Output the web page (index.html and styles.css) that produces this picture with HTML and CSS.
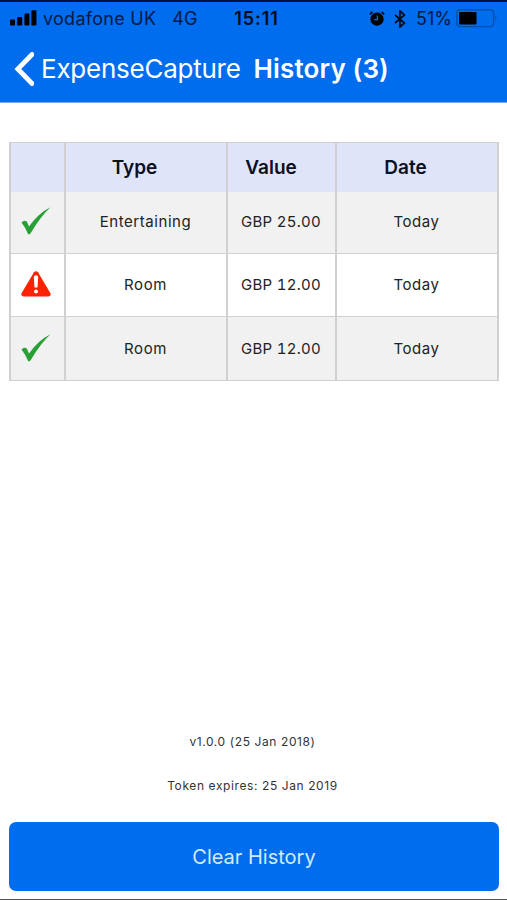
FILE: index.html
```html
<!DOCTYPE html>
<html lang="en">

<head>
    <meta charset="UTF-8">
    <meta name="viewport" content="width=device-width, initial-scale=1.0">
    <title>ExpenseCapture - History</title>
    <link rel="stylesheet" href="styles.css">
</head>

<body>

    <header>
        <div class="status-bar">
            <div class="status-left">
                <svg class="signal" width="27" height="17" viewBox="0 0 27 17">
                    <rect x="0" y="9.5" width="5" height="6" rx="1.2" />
                    <rect x="7.2" y="7" width="5" height="8.5" rx="1.2" />
                    <rect x="14.4" y="3.5" width="5" height="12" rx="1.2" />
                    <rect x="21.4" y="0.3" width="5" height="15.2" rx="1.2" />
                </svg>
                <span class="carrier">vodafone UK</span>
                <span class="network">4G</span>
            </div>
            <span class="clock">15:11</span>
            <div class="status-right">
                <svg width="16" height="16" viewBox="0 0 16 16">
                    <circle cx="8" cy="8.2" r="6.6" />
                    <path d="M0.8 3.3L3.4 0.9M15.2 3.3L12.6 0.9" fill="none" stroke="#000b1c" stroke-width="1.8" />
                    <path d="M8.4 4.5v4.1H5.2" fill="none" stroke="#006cee" stroke-width="1.3" />
                </svg>
                <svg class="bluetooth" width="12" height="18" viewBox="0 0 12 18">
                    <path d="M1 5l9.5 8L6 17V1l4.5 4L1 13" fill="none" stroke="#000b1c" stroke-width="1.7" />
                </svg>
                <span class="percent">51%</span>
                <svg class="battery" width="42" height="19" viewBox="0 0 42 19">
                    <rect x="0.8" y="0.8" width="36.8" height="16.8" rx="3" fill="none" stroke="#0450ae" stroke-width="1.4" />
                    <rect x="3" y="3" width="17.5" height="12.4" rx="0.8" fill="#000" />
                    <path d="M39.3 6.5q2.6 2.8 0 5.8z" fill="#0450ae" />
                </svg>
            </div>
        </div>
        <div class="nav-bar">
            <svg class="back" width="20" height="34" viewBox="0 0 20 34">
                <path d="M18 2.5L3.8 17l14.2 14.5" fill="none" stroke="#fff" stroke-width="4.8" stroke-linecap="round" />
            </svg>
            <span class="back-label">ExpenseCapture</span>
            <h1>History (3)</h1>
        </div>
    </header>

    <main>
        <table>
            <colgroup>
                <col class="col-status">
                <col class="col-type">
                <col class="col-value">
                <col class="col-date">
            </colgroup>
            <thead>
                <tr>
                    <th></th>
                    <th>Type</th>
                    <th>Value</th>
                    <th>Date</th>
                </tr>
            </thead>
            <tbody>
                <tr>
                    <td class="icon"><svg width="30" height="28" viewBox="0 0 30 28"><path class="tick" d="M0.5 15.5Q3 12.8 5.8 14.5L8 19.5Q17 6.5 29.5 0.3Q19.5 9.5 9.8 26Q8.2 28.5 6.8 26.5Q4.5 20.5 0.5 15.5z" /></svg></td>
                    <td>Entertaining</td>
                    <td class="value">GBP 25.00</td>
                    <td>Today</td>
                </tr>
                <tr>
                    <td class="icon"><svg width="30" height="26" viewBox="0 0 30 26"><path class="warning" d="M13 1.3q2-2 4 0L29.3 22q1.3 3-1.8 3.5h-25Q-0.6 25 0.7 22z" /><path d="M12.8 6q0-1.8 2.2-1.8t2.2 1.8l-0.7 10.5h-3z" fill="#fff" /><circle cx="15" cy="20.5" r="2" fill="#fff" /></svg></td>
                    <td>Room</td>
                    <td class="value">GBP 12.00</td>
                    <td>Today</td>
                </tr>
                <tr>
                    <td class="icon"><svg width="30" height="28" viewBox="0 0 30 28"><path class="tick" d="M0.5 15.5Q3 12.8 5.8 14.5L8 19.5Q17 6.5 29.5 0.3Q19.5 9.5 9.8 26Q8.2 28.5 6.8 26.5Q4.5 20.5 0.5 15.5z" /></svg></td>
                    <td>Room</td>
                    <td class="value">GBP 12.00</td>
                    <td>Today</td>
                </tr>
            </tbody>
        </table>
    </main>

    <footer>
        <p class="version">v1.0.0 (25 Jan 2018)</p>
        <p class="token">Token expires: 25 Jan 2019</p>
        <button>Clear History</button>
    </footer>

</body>

</html>
```

FILE: styles.css
```css
* {
    box-sizing: border-box;
}

body {
    margin: 0;
    height: 900px;
    display: flex;
    flex-direction: column;
    overflow: hidden;
    background-color: #fff;
    border-bottom: 1px solid #555;
    font-family: Inter, sans-serif;
}

header {
    height: 103px;
    background-color: #006cee;
    border-top: 2px solid #00103a;
    border-bottom: 1px solid #7faee8;
}

.status-bar {
    display: grid;
    grid-template-columns: 1fr auto 1fr;
    align-items: center;
    height: 33px;
    padding: 0 9px 0 10px;
    color: #001a44;
    font-size: 18px;
    white-space: nowrap;
}

.status-left,
.status-right {
    display: flex;
    align-items: center;
}

.status-right {
    justify-content: flex-end;
}

.carrier {
    margin-left: 6px;
    letter-spacing: 0.27px;
}

.network {
    margin-left: 16px;
}

.clock {
    margin-left: 5px;
    font-weight: 600;
    color: #000b1c;
    letter-spacing: 0.9px;
}

.bluetooth {
    margin-left: 9px;
}

.percent {
    margin: 0 4px 0 10px;
}

.nav-bar {
    display: flex;
    align-items: center;
    height: 67px;
    padding-left: 14px;
    color: #fff;
    font-size: 26px;
    white-space: nowrap;
}

.back-label {
    margin-left: 7px;
    letter-spacing: -0.25px;
}

h1 {
    margin: 0 0 0 13px;
    font-size: 26px;
    font-weight: 600;
    letter-spacing: 0.15px;
}

main {
    flex: 1;
    padding: 39px 8px 0 9px;
}

table {
    width: 490px;
    table-layout: fixed;
    border-collapse: collapse;
    color: #222;
    font-size: 15px;
}

.col-status {
    width: 55px;
}

.col-type {
    width: 162px;
}

.col-value {
    width: 109px;
}

th,
td {
    padding: 0;
    text-align: center;
    border: 2px solid #d0d0d0;
    border-top-width: 1px;
    border-bottom-width: 1px;
}

th {
    height: 49px;
    padding-right: 23px;
    background-color: #dfe4f9;
    border-bottom: none;
    color: #0c1020;
    font-size: 19px;
    font-weight: 600;
}

th:nth-child(3) {
    padding-right: 21px;
}

td {
    height: 63px;
    padding: 0 1px 1px 0;
    letter-spacing: 0.55px;
}

.value {
    letter-spacing: 0.25px;
    font-variant-numeric: tabular-nums;
}

tbody tr:first-child td {
    height: 62px;
    border-top: none;
}

tbody tr:last-child td {
    height: 64px;
}

tbody tr:nth-child(odd) {
    background-color: #f1f1f1;
}

.icon {
    padding: 0 4px 2px 0;
}

.icon svg {
    display: block;
    margin: 0 auto;
}

.tick {
    fill: #27a035;
}

.warning {
    fill: #fc2204;
}

footer {
    padding: 0 8px 8px 9px;
    text-align: center;
    color: #333;
    font-size: 12px;
    letter-spacing: 0.6px;
}

footer p {
    margin: 0 3px 28px 0;
    line-height: 16px;
}

button {
    display: block;
    width: 100%;
    height: 69px;
    border: none;
    border-radius: 7px;
    background-color: #006cee;
    color: #d4eaff;
    font-family: inherit;
    font-size: 20px;
}
```
